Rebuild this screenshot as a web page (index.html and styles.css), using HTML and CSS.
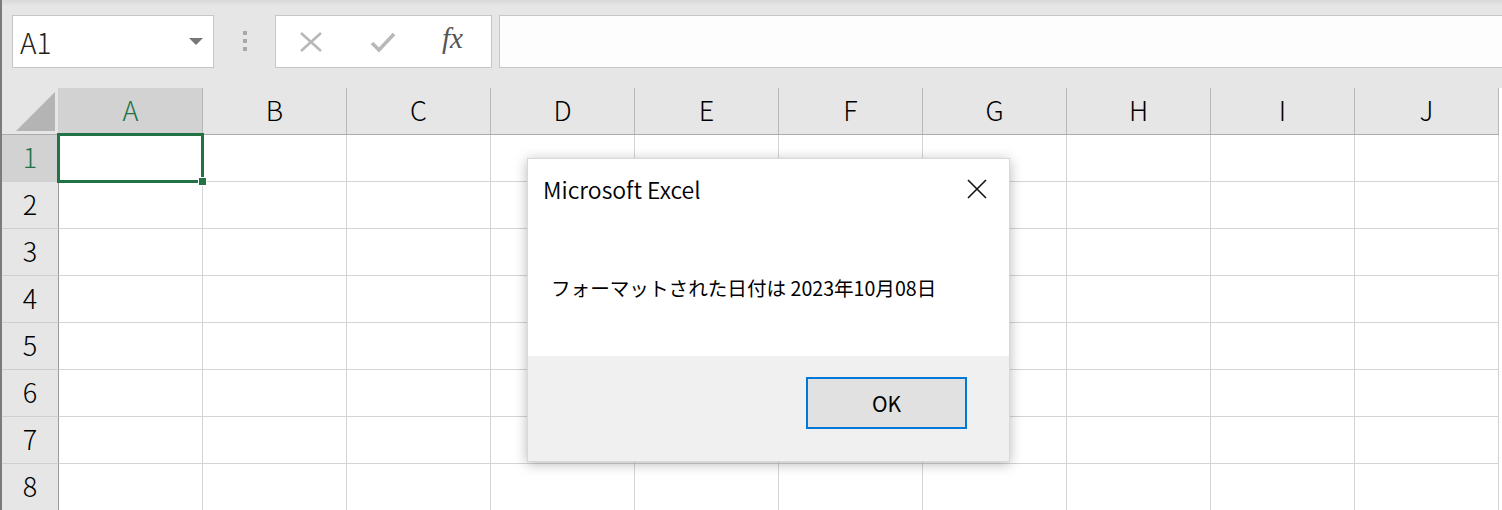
FILE: index.html
```html
<!DOCTYPE html>
<html lang="ja">
<head>
    <meta charset="UTF-8">
    <title>Microsoft Excel</title>
    <link rel="stylesheet" href="styles.css">
</head>
<body>
    <div class="app">
        <div class="toolbar">
            <div class="name-box">
                <span class="name-text">A1</span>
                <span class="name-arrow"></span>
            </div>
            <div class="grip">
                <span></span><span></span><span></span>
            </div>
            <div class="fx-buttons">
                <svg class="fx-icon" width="24" height="22" viewBox="0 0 24 22">
                    <path d="M2 2 L22 20 M22 2 L2 20" stroke="#b8b8b8" stroke-width="2.6" fill="none"/>
                </svg>
                <svg class="fx-icon" width="26" height="22" viewBox="0 0 26 22">
                    <path d="M2 12 L9 19 L24 3" stroke="#b8b8b8" stroke-width="3.6" fill="none"/>
                </svg>
                <span class="fx-label">fx</span>
            </div>
            <div class="formula-input"></div>
        </div>

        <div class="sheet">
            <div class="corner"><span class="corner-tri"></span></div>
            <div class="col-head active">A</div>
            <div class="col-head">B</div>
            <div class="col-head">C</div>
            <div class="col-head">D</div>
            <div class="col-head">E</div>
            <div class="col-head">F</div>
            <div class="col-head">G</div>
            <div class="col-head">H</div>
            <div class="col-head">I</div>
            <div class="col-head">J</div>

            <div class="row-head active">1</div>
            <div class="cell"></div><div class="cell"></div><div class="cell"></div><div class="cell"></div><div class="cell"></div>
            <div class="cell"></div><div class="cell"></div><div class="cell"></div><div class="cell"></div><div class="cell"></div>

            <div class="row-head">2</div>
            <div class="cell"></div><div class="cell"></div><div class="cell"></div><div class="cell"></div><div class="cell"></div>
            <div class="cell"></div><div class="cell"></div><div class="cell"></div><div class="cell"></div><div class="cell"></div>

            <div class="row-head">3</div>
            <div class="cell"></div><div class="cell"></div><div class="cell"></div><div class="cell"></div><div class="cell"></div>
            <div class="cell"></div><div class="cell"></div><div class="cell"></div><div class="cell"></div><div class="cell"></div>

            <div class="row-head">4</div>
            <div class="cell"></div><div class="cell"></div><div class="cell"></div><div class="cell"></div><div class="cell"></div>
            <div class="cell"></div><div class="cell"></div><div class="cell"></div><div class="cell"></div><div class="cell"></div>

            <div class="row-head">5</div>
            <div class="cell"></div><div class="cell"></div><div class="cell"></div><div class="cell"></div><div class="cell"></div>
            <div class="cell"></div><div class="cell"></div><div class="cell"></div><div class="cell"></div><div class="cell"></div>

            <div class="row-head">6</div>
            <div class="cell"></div><div class="cell"></div><div class="cell"></div><div class="cell"></div><div class="cell"></div>
            <div class="cell"></div><div class="cell"></div><div class="cell"></div><div class="cell"></div><div class="cell"></div>

            <div class="row-head">7</div>
            <div class="cell"></div><div class="cell"></div><div class="cell"></div><div class="cell"></div><div class="cell"></div>
            <div class="cell"></div><div class="cell"></div><div class="cell"></div><div class="cell"></div><div class="cell"></div>

            <div class="row-head">8</div>
            <div class="cell"></div><div class="cell"></div><div class="cell"></div><div class="cell"></div><div class="cell"></div>
            <div class="cell"></div><div class="cell"></div><div class="cell"></div><div class="cell"></div><div class="cell"></div>

            <!-- active cell outline with fill handle -->
            <div class="selection"><span class="fill-handle"></span></div>
        </div>

        <div class="msgbox">
            <div class="msgbox-title">
                <span>Microsoft Excel</span>
                <svg class="msgbox-close" width="20" height="20" viewBox="0 0 20 20">
                    <path d="M1 1 L19 19 M19 1 L1 19" stroke="#111" stroke-width="1.6" fill="none"/>
                </svg>
            </div>
            <div class="msgbox-body">フォーマットされた日付は 2023年10月08日</div>
            <div class="msgbox-footer">
                <button class="msgbox-ok">OK</button>
            </div>
        </div>
    </div>
</body>
</html>
```

FILE: styles.css
```css
body {
    margin: 0;
    background-color: #ffffff;
    font-family: "Noto Sans CJK JP", "Noto Sans", sans-serif;
    overflow: hidden;
}

.app {
    position: relative;
    height: 510px;
    border-left: 2px solid #7b7b7b;
    background-color: #ffffff;
}

/* name box + formula bar */
.toolbar {
    display: flex;
    align-items: flex-start;
    height: 88px;
    box-sizing: border-box;
    padding: 15px 0 0 10px;
    background: linear-gradient(#d9d9d9, #e6e6e6 6px);
}

.name-box {
    position: relative;
    display: flex;
    align-items: center;
    width: 202px;
    height: 53px;
    box-sizing: border-box;
    border: 1px solid #c6c6c6;
    background-color: #ffffff;
}

.name-text {
    margin-left: 7px;
    font-size: 28px;
    font-weight: 300;
    color: #222222;
    line-height: 1;
}

.name-arrow {
    position: absolute;
    left: 176px;
    top: 22px;
    width: 0;
    height: 0;
    border-left: 7px solid transparent;
    border-right: 7px solid transparent;
    border-top: 7px solid #777777;
}

.grip {
    display: flex;
    flex-direction: column;
    gap: 4px;
    width: 61px;
    align-items: center;
    padding-top: 16px;
    box-sizing: border-box;
}

.grip span {
    width: 4px;
    height: 4px;
    background-color: #a8a8a8;
}

.fx-buttons {
    display: flex;
    align-items: center;
    width: 217px;
    height: 53px;
    box-sizing: border-box;
    border: 1px solid #c6c6c6;
    background-color: #ffffff;
    padding-left: 23px;
}

.fx-icon:first-child {
    margin-right: 47px;
}

.fx-icon + .fx-icon {
    margin-right: 46px;
}

.fx-label {
    font-family: "Liberation Serif", serif;
    font-style: italic;
    font-size: 29px;
    color: #555555;
    margin-top: -6px;
}

.formula-input {
    flex: 1;
    height: 53px;
    margin-left: 7px;
    box-sizing: border-box;
    border: 1px solid #c6c6c6;
    border-right: none;
    background-color: #fdfdfd;
}

/* worksheet grid */
.sheet {
    position: relative;
    display: grid;
    grid-template-columns: 57px repeat(10, 144px);
    grid-template-rows: 47px;
    grid-auto-rows: 47px;
}

.corner {
    position: relative;
    background-color: #e6e6e6;
    border-right: 1px solid #cfcfcf;
    border-bottom: 1px solid #ababab;
}

.corner-tri {
    position: absolute;
    left: 14px;
    top: 4px;
    width: 39px;
    height: 39px;
    background-color: #b4b4b4;
    clip-path: polygon(100% 0, 100% 100%, 0 100%);
}

.col-head,
.row-head {
    display: flex;
    align-items: center;
    justify-content: center;
    padding-bottom: 4px;
    background-color: #e6e6e6;
    font-size: 27px;
    font-weight: 300;
    color: #000000;
    box-sizing: border-box;
}

.col-head {
    border-right: 1px solid #b8b8b8;
    border-bottom: 1px solid #ababab;
}

.row-head {
    border-right: 1px solid #9a9a9a;
    border-bottom: 1px solid #cfcfcf;
}

.col-head.active,
.row-head.active {
    background-color: #d2d2d2;
    color: #217346;
}

.cell {
    border-right: 1px solid #d4d4d4;
    border-bottom: 1px solid #d4d4d4;
}

.selection {
    position: absolute;
    left: 55px;
    top: 45px;
    width: 147px;
    height: 50px;
    box-sizing: border-box;
    border: 3px solid #217346;
}

.fill-handle {
    position: absolute;
    right: -6px;
    bottom: -6px;
    width: 7px;
    height: 7px;
    background-color: #217346;
    border: 1px solid #ffffff;
}

/* message box */
.msgbox {
    position: absolute;
    left: 525px;
    top: 158px;
    width: 481px;
    height: 302px;
    display: flex;
    flex-direction: column;
    background-color: #ffffff;
    border: 1px solid #d8d8d8;
    box-shadow: 0 2px 12px rgba(0, 0, 0, 0.28);
}

.msgbox-title {
    display: flex;
    align-items: center;
    justify-content: space-between;
    height: 60px;
    padding: 0 22px 0 15px;
    font-size: 23px;
    font-weight: 350;
    color: #000000;
}

.msgbox-body {
    flex: 1;
    padding: 54px 0 0 23px;
    font-size: 19.6px;
    color: #000000;
}

.msgbox-footer {
    display: flex;
    justify-content: flex-end;
    align-items: flex-start;
    height: 105px;
    box-sizing: border-box;
    padding: 21px 42px 0 0;
    background-color: #f0f0f0;
}

.msgbox-ok {
    width: 161px;
    height: 52px;
    border: 2px solid #0078d7;
    background-color: #e1e1e1;
    font-family: "Noto Sans CJK JP", "Noto Sans", sans-serif;
    font-size: 21px;
    color: #000000;
}
```
